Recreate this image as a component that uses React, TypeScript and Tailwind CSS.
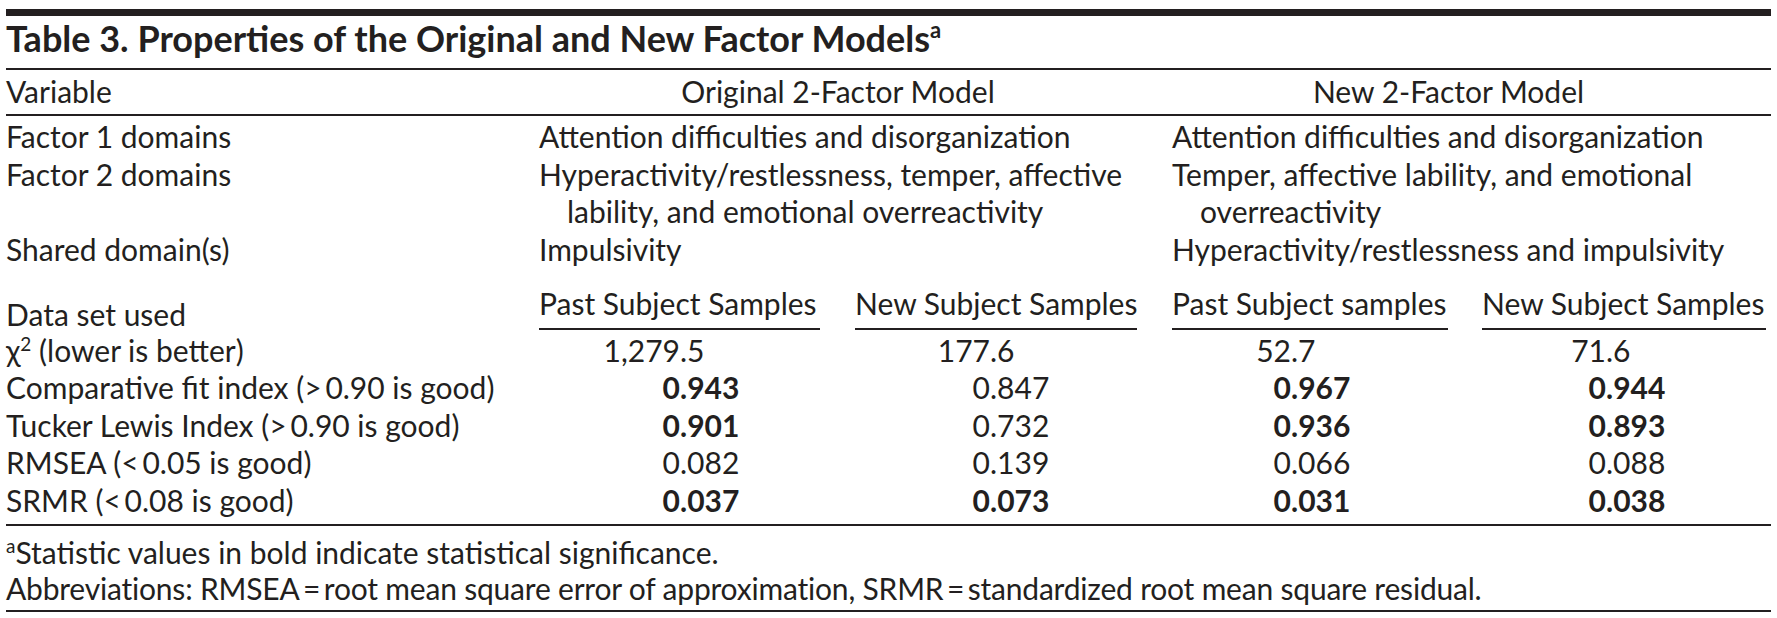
const font = "font-['Lato',_'Liberation_Sans',_sans-serif]"

type Val = [string, string, boolean]

const stats: { label: React.ReactNode; vals: Val[] }[] = [
  {
    label: (
      <>
        χ<sup className="text-[19px] -top-[11px]">2</sup> (lower is better)
      </>
    ),
    vals: [
      ["1,279", "5", false],
      ["177", "6", false],
      ["52", "7", false],
      ["71", "6", false],
    ],
  },
  {
    label: "Comparative fit index (>\u20090.90 is good)",
    vals: [
      ["0", "943", true],
      ["0", "847", false],
      ["0", "967", true],
      ["0", "944", true],
    ],
  },
  {
    label: "Tucker Lewis Index (>\u20090.90 is good)",
    vals: [
      ["0", "901", true],
      ["0", "732", false],
      ["0", "936", true],
      ["0", "893", true],
    ],
  },
  {
    label: "RMSEA (<\u20090.05 is good)",
    vals: [
      ["0", "082", false],
      ["0", "139", false],
      ["0", "066", false],
      ["0", "088", false],
    ],
  },
  {
    label: "SRMR (<\u20090.08 is good)",
    vals: [
      ["0", "037", true],
      ["0", "073", true],
      ["0", "031", true],
      ["0", "038", true],
    ],
  },
]

// offsets so the decimal points line up inside each column
const valPad = ["pl-[61px]", "pl-[55px]", "pl-[39px]", "pl-[44px]"]

const grid = "grid grid-cols-[533px_316px_317px_310px_1fr]"

function Value({ v, pad }: { v: Val; pad: string }) {
  const [int, frac, bold] = v
  return (
    <div className={`${pad} whitespace-nowrap ${bold ? "font-bold" : ""}`}>
      <span className="inline-block w-[80px] text-right">{int}</span>.{frac}
    </div>
  )
}

export default function App() {
  return (
    <div className={`min-h-screen w-[1777px] bg-white px-[6px] pt-[9px] text-[30px] leading-[37.5px] text-[#231f20] ${font}`}>
      <div className="border-t-[7px] border-[#231f20]">
        <div className="border-b-2 border-[#231f20] pt-[4px] pb-[10px] text-[36px] font-bold whitespace-nowrap">
          Table 3. Properties of the Original and New Factor Models
          <sup className="text-[22px] font-bold -top-[14px]">a</sup>
        </div>

        {/* header */}
        <div className={`${grid} border-b-2 border-[#231f20] pt-[3px] pb-[4px] whitespace-nowrap`}>
          <div>Variable</div>
          <div className="col-span-2 pr-[35px] text-center">Original 2-Factor Model</div>
          <div className="col-span-2 pr-[46px] text-center">New 2-Factor Model</div>
        </div>

        {/* domains */}
        <div className="pt-[2px] whitespace-nowrap">
          <div className={grid}>
            <div>Factor 1 domains</div>
            <div className="col-span-2">Attention difficulties and disorganization</div>
            <div className="col-span-2">Attention difficulties and disorganization</div>
          </div>
          <div className={grid}>
            <div>Factor 2 domains</div>
            <div className="col-span-2">
              <div>Hyperactivity/restlessness, temper, affective</div>
              <div className="pl-[28px]">lability, and emotional overreactivity</div>
            </div>
            <div className="col-span-2">
              <div>Temper, affective lability, and emotional</div>
              <div className="pl-[28px]">overreactivity</div>
            </div>
          </div>
          <div className={grid}>
            <div>Shared domain(s)</div>
            <div className="col-span-2">Impulsivity</div>
            <div className="col-span-2">Hyperactivity/restlessness and impulsivity</div>
          </div>
        </div>

        {/* data set row */}
        <div className={`${grid} mt-[17px] items-end whitespace-nowrap`}>
          <div className="leading-[31px]">Data set used</div>
          <div className="w-[281px] border-b-2 border-[#231f20] pb-[5px]">Past Subject Samples</div>
          <div className="w-[282px] border-b-2 border-[#231f20] pb-[5px]">New Subject Samples</div>
          <div className="w-[276px] border-b-2 border-[#231f20] pb-[5px]">Past Subject samples</div>
          <div className="w-[284px] border-b-2 border-[#231f20] pb-[5px]">New Subject Samples</div>
        </div>

        {/* fit statistics */}
        <div className="mt-[2px] border-b-2 border-[#231f20] pb-[5px] whitespace-nowrap">
          {stats.map((row, i) => (
            <div key={i} className={grid}>
              <div>{row.label}</div>
              {row.vals.map((v, j) => (
                <Value key={j} v={v} pad={valPad[j]} />
              ))}
            </div>
          ))}
        </div>

        {/* notes */}
        <div className="border-b-2 border-[#231f20] pt-[8px] pb-[4px] leading-[36px] whitespace-nowrap">
          <div>
            <sup className="text-[19px] -top-[11px]">a</sup>Statistic values in bold indicate statistical significance.
          </div>
          <div className="tracking-[-0.2px]">
            Abbreviations: RMSEA{"\u2009=\u2009"}root mean square error of approximation, SRMR{"\u2009=\u2009"}standardized root mean
            square residual.
          </div>
        </div>
      </div>
    </div>
  )
}
